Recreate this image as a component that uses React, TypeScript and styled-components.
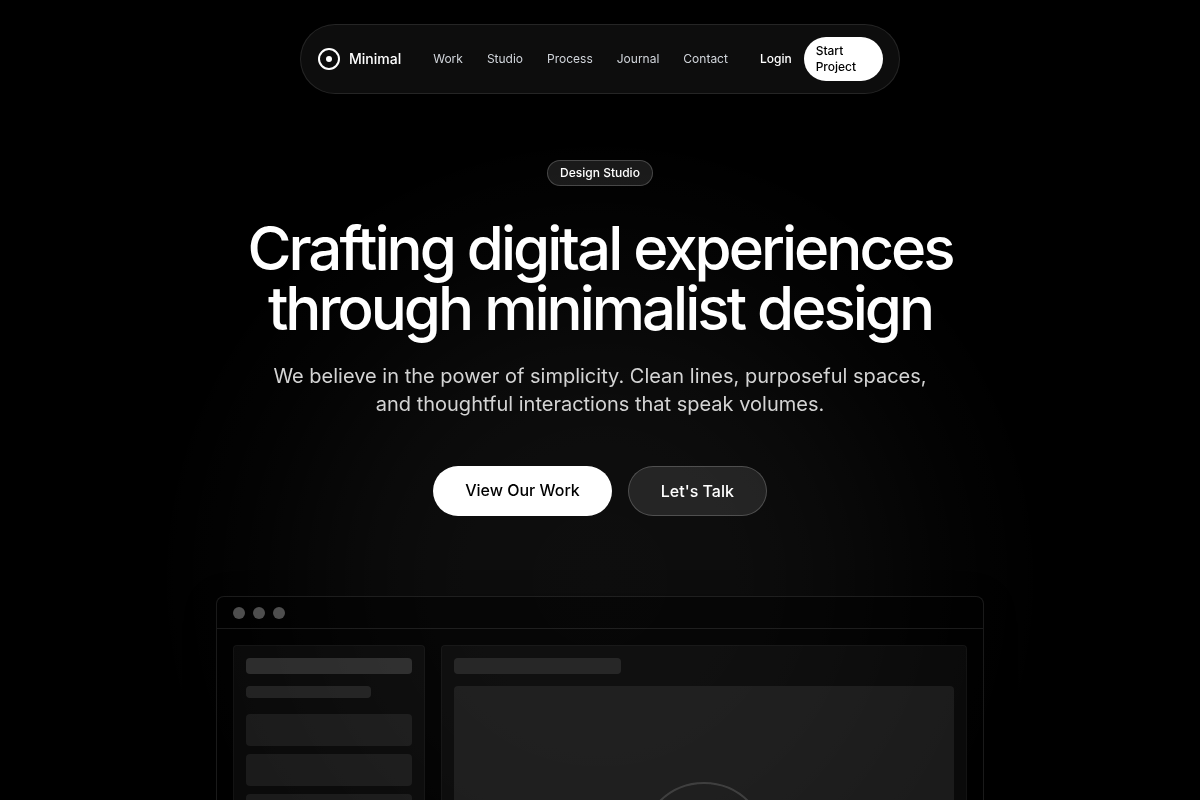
import React from "react";
import styled, { createGlobalStyle } from "styled-components";

const GlobalStyle = createGlobalStyle`
  *, *::before, *::after { box-sizing: border-box; }
  body {
    margin: 0;
    background: #000;
    color: #fff;
    font-family: Inter, "Liberation Sans", sans-serif;
    -webkit-font-smoothing: antialiased;
  }
  h1, p, ul { margin: 0; padding: 0; }
  a { color: inherit; text-decoration: none; }
`;

const Page = styled.div`
  position: relative;
  overflow: hidden;
  min-height: 100vh;
  padding: 24px 24px 80px;
  isolation: isolate;
`;

/* Soft falloff: bright core, slow fade at the rim. */
const Glow = styled.div`
  position: absolute;
  z-index: -1;
  top: 120px;
  left: 50%;
  width: 920px;
  height: 920px;
  transform: translateX(-50%);
  background: radial-gradient(
    circle closest-side,
    rgba(255, 255, 255, 0.055) 0px,
    rgba(255, 255, 255, 0.051) 135px,
    rgba(255, 255, 255, 0.047) 173px,
    rgba(255, 255, 255, 0.038) 227px,
    rgba(255, 255, 255, 0.026) 284px,
    rgba(255, 255, 255, 0.014) 340px,
    rgba(255, 255, 255, 0.006) 389px,
    rgba(255, 255, 255, 0.002) 426px,
    transparent 440px
  );
  pointer-events: none;
`;

const NavBar = styled.header`
  display: flex;
  align-items: center;
  justify-content: space-between;
  gap: 32px;
  max-width: 600px;
  margin: 0 auto;
  padding: 12px 16px;
  border: 1px solid rgba(255, 255, 255, 0.1);
  border-radius: 35px;
  background: rgba(255, 255, 255, 0.05);
  backdrop-filter: blur(12px);
  will-change: transform;
`;

const Brand = styled.a`
  display: flex;
  align-items: center;
  gap: 8px;
  font-size: 14px;
  line-height: 20px;
  font-weight: 500;
`;

const Links = styled.nav`
  display: flex;
  gap: 24px;
  font-size: 12px;
  line-height: 16px;
  color: #d1d5db;
`;

const Actions = styled.div`
  display: flex;
  align-items: center;
  gap: 12px;
  font-size: 12px;
  line-height: 16px;
  font-weight: 500;
`;

const TextButton = styled.button`
  padding: 0;
  border: 0;
  background: none;
  color: inherit;
  font: inherit;
  cursor: pointer;
`;

const StartButton = styled(TextButton)`
  padding: 6px 12px;
  border-radius: 22px;
  background: #fff;
  color: #000;
  text-align: left;
`;

const Hero = styled.main`
  display: flex;
  flex-direction: column;
  align-items: center;
  padding-top: 66px;
  text-align: center;
  will-change: transform;
`;

const Badge = styled.span`
  padding: 4px 12px;
  border: 1px solid rgba(255, 255, 255, 0.2);
  border-radius: 13px;
  background: rgba(255, 255, 255, 0.1);
  font-size: 12px;
  line-height: 16px;
  font-weight: 500;
`;

const Title = styled.h1`
  max-width: 768px;
  margin-top: 32px;
  font-size: 60px;
  line-height: 60px;
  font-weight: 500;
  letter-spacing: -0.05em;
`;

const Lead = styled.p`
  max-width: 672px;
  margin-top: 24px;
  font-size: 20px;
  line-height: 28px;
  color: #d4d4d4;
`;

const ButtonRow = styled.div`
  display: flex;
  flex-wrap: wrap;
  justify-content: center;
  gap: 16px;
  margin-top: 48px;
`;

const ButtonLink = styled.a<{ $outlined?: boolean }>`
  padding: 12px 32px;
  border: ${(p) => (p.$outlined ? "1px solid rgba(255, 255, 255, 0.2)" : "0")};
  border-radius: 25px;
  background: ${(p) => (p.$outlined ? "rgba(255, 255, 255, 0.1)" : "#fff")};
  color: ${(p) => (p.$outlined ? "#fff" : "#000")};
  font-size: 16px;
  line-height: 24px;
  font-weight: 500;
`;

const Mockup = styled.div`
  width: 100%;
  max-width: 768px;
  margin-top: 80px;
  border: 1px solid rgba(255, 255, 255, 0.1);
  border-radius: 8px;
  background: rgba(0, 0, 0, 0.5);
  box-shadow: 0 8px 32px rgba(0, 0, 0, 0.3);
`;

const WindowBar = styled.div`
  display: flex;
  align-items: center;
  gap: 8px;
  height: 32px;
  padding: 0 16px;
  border-bottom: 1px solid rgba(255, 255, 255, 0.1);
`;

const Dot = styled.span`
  width: 12px;
  height: 12px;
  border-radius: 50%;
  background: rgba(255, 255, 255, 0.3);
`;

const WindowBody = styled.div`
  display: flex;
  gap: 16px;
  padding: 16px;
`;

const Panel = styled.div<{ $side?: boolean }>`
  display: flex;
  flex-direction: column;
  flex: ${(p) => (p.$side ? "0 0 192px" : "1")};
  gap: 12px;
  padding: 12px;
  border: 1px solid rgba(255, 255, 255, 0.04);
  border-radius: 4px;
  background: rgba(255, 255, 255, 0.04);
`;

const Block = styled.div<{ $w?: string; $h: number; $tone: number }>`
  width: ${(p) => p.$w ?? "100%"};
  height: ${(p) => p.$h}px;
  border-radius: 4px;
  background: rgba(255, 255, 255, ${(p) => p.$tone});
`;

const List = styled.div`
  display: flex;
  flex-direction: column;
  gap: 8px;
  padding-top: 4px;
`;

const Preview = styled.div`
  display: flex;
  align-items: center;
  justify-content: center;
  height: 320px;
  border-radius: 4px;
  background: rgba(255, 255, 255, 0.07);
`;

const Ring = styled.div`
  width: 128px;
  height: 128px;
  border: 2px solid rgba(255, 255, 255, 0.15);
  border-radius: 50%;
`;

const links = ["Work", "Studio", "Process", "Journal", "Contact"];

export default function App() {
  return (
    <Page>
      <GlobalStyle />
      <Glow />
      <NavBar>
        <Brand href="#">
          <svg width="24" height="24" viewBox="0 0 24 24" fill="none" aria-hidden="true">
            <circle cx="12" cy="12" r="10" stroke="#fff" strokeWidth="2" />
            <circle cx="12" cy="12" r="3" fill="#fff" />
          </svg>
          Minimal
        </Brand>
        <Links>
          {links.map((label) => (
            <a key={label} href={`#${label.toLowerCase()}`}>
              {label}
            </a>
          ))}
        </Links>
        <Actions>
          <TextButton type="button">Login</TextButton>
          <StartButton type="button">Start Project</StartButton>
        </Actions>
      </NavBar>
      <Hero>
        <Badge>Design Studio</Badge>
        <Title>Crafting digital experiences through minimalist design</Title>
        <Lead>
          We believe in the power of simplicity. Clean lines, purposeful spaces, and thoughtful
          interactions that speak volumes.
        </Lead>
        <ButtonRow>
          <ButtonLink href="#work">View Our Work</ButtonLink>
          <ButtonLink href="#contact" $outlined>
            Let's Talk
          </ButtonLink>
        </ButtonRow>
        <Mockup aria-hidden="true">
          <WindowBar>
            <Dot />
            <Dot />
            <Dot />
          </WindowBar>
          <WindowBody>
            <Panel $side>
              <Block $h={16} $tone={0.14} />
              <Block $w="75%" $h={12} $tone={0.1} />
              <List>
                <Block $h={32} $tone={0.07} />
                <Block $h={32} $tone={0.07} />
                <Block $h={32} $tone={0.07} />
                <Block $h={32} $tone={0.07} />
              </List>
            </Panel>
            <Panel>
              <Block $w="33.3%" $h={16} $tone={0.1} />
              <Preview>
                <Ring />
              </Preview>
            </Panel>
          </WindowBody>
        </Mockup>
      </Hero>
    </Page>
  );
}
